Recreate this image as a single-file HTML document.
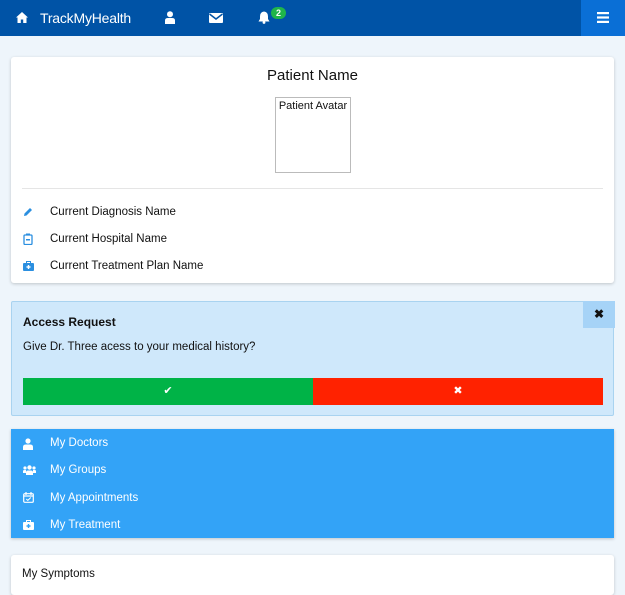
<!DOCTYPE html>
<html><head><meta charset="utf-8"><style>
*{box-sizing:border-box;margin:0;padding:0}
body{width:625px;height:573px;overflow:hidden;background:#eef5fb;font-family:"Liberation Sans",sans-serif;font-size:11.5px;color:#111;position:relative}
.nav{position:absolute;left:0;top:0;width:625px;height:36px;background:#0053a6;color:#fff}
.nav .t{position:absolute;left:40px;top:10px;font-size:14px;letter-spacing:-0.2px}
.burger{position:absolute;left:581px;top:0;width:44px;height:36px;background:#0a6fd6}
.card{position:absolute;left:11px;width:603px;background:#fff;border-radius:3px;box-shadow:0 1px 3px rgba(0,0,0,.2)}
.ab{position:absolute}
.item{position:absolute;left:39px}
.ic{position:absolute;left:12px}
</style></head><body>
<div class="nav">
 <svg class="ab" style="left:16px;top:12px" width="12" height="11" viewBox="0 0 12 11"><path d="M6 0L0 5.5h1.5V11h3.3V7.5h2.4V11h3.3V5.5H12z" fill="#fff"/></svg>
 <div class="t">TrackMyHealth</div>
 <svg class="ab" style="left:165px;top:11px" width="10" height="13" viewBox="0 0 10 13"><circle cx="5" cy="3.2" r="3" fill="#fff"/><path d="M0 13V9.5Q0 7 3 7h4q3 0 3 2.5V13z" fill="#fff"/></svg>
 <svg class="ab" style="left:209px;top:13px" width="14" height="10" viewBox="0 0 14 10"><rect width="14" height="10" rx="1" fill="#fff"/><path d="M0.5 1L7 6l6.5-5" stroke="#0053a6" stroke-width="1.5" fill="none"/></svg>
 <svg class="ab" style="left:258px;top:11px" width="12" height="13" viewBox="0 0 12 13"><path d="M6 0.5Q2 1 2 5.5V8L0.5 10.5h11L10 8V5.5Q10 1 6 0.5z" fill="#fff"/><circle cx="6" cy="11.5" r="1.4" fill="#fff"/></svg>
 <div class="ab" style="left:271px;top:7px;width:15px;height:12px;border-radius:6px;background:#1fb54a;font-size:9px;text-align:center;line-height:12px;font-weight:bold">2</div>
 <div class="burger"><svg class="ab" style="left:16px;top:12px" width="12" height="11" viewBox="0 0 12 11"><rect y="0" width="12" height="2.2" fill="#fff"/><rect y="4.4" width="12" height="2.2" fill="#fff"/><rect y="8.8" width="12" height="2.2" fill="#fff"/></svg></div>
</div>

<div class="card" style="top:57px;height:226px">
 <div class="ab" style="left:0;width:603px;top:10px;text-align:center;font-size:15px">Patient Name</div>
 <div class="ab" style="left:264px;top:40px;width:76px;height:76px;border:1px solid #bbb;font-size:11px;text-align:center;padding-top:2px">Patient Avatar</div>
 <div class="ab" style="left:11px;top:131px;width:581px;border-top:1px solid #e5e5e5"></div>
 <svg class="ic" style="top:150px" width="10" height="10" viewBox="0 0 10 10"><path d="M1 9l0.5-2.5L7 1l2 2-5.5 5.5z" fill="#2b8fe0"/></svg>
 <div class="item" style="top:149px">Current Diagnosis Name</div>
 <svg class="ic" style="top:176px" width="10" height="12" viewBox="0 0 10 12"><rect x="1" y="2" width="8" height="9.5" rx="1" fill="none" stroke="#2b8fe0" stroke-width="1.3"/><rect x="3" y="0.5" width="4" height="2" fill="#2b8fe0"/><rect x="3" y="6" width="4" height="1.5" fill="#2b8fe0"/></svg>
 <div class="item" style="top:176px">Current Hospital Name</div>
 <svg class="ic" style="top:204px" width="11" height="10" viewBox="0 0 11 10"><rect x="0" y="2" width="11" height="8" rx="1" fill="#2b8fe0"/><rect x="3.5" y="0.5" width="4" height="2" fill="none" stroke="#2b8fe0"/><path d="M5.5 4v4M3.5 6h4" stroke="#fff" stroke-width="1.4"/></svg>
 <div class="item" style="top:203px">Current Treatment Plan Name</div>
</div>

<div class="ab" style="left:11px;top:301px;width:603px;height:115px;background:#cfe8fb;border:1px solid #a9d3f0;border-radius:2px">
 <div class="ab" style="left:571px;top:-1px;width:32px;height:27px;background:#a6d3f7;text-align:center;line-height:27px;font-weight:bold;font-size:12px">✖</div>
 <div class="ab" style="left:11px;top:13px;font-weight:bold;font-size:12px">Access Request</div>
 <div class="ab" style="left:11px;top:39px">Give Dr. Three acess to your medical history?</div>
 <div class="ab" style="left:11px;top:76px;width:290px;height:27px;background:#00b347;color:#fff;text-align:center;line-height:27px;font-size:11px">✔</div>
 <div class="ab" style="left:301px;top:76px;width:290px;height:27px;background:#ff2200;color:#fff;text-align:center;line-height:27px;font-size:11px">✖</div>
</div>

<div class="ab" style="left:11px;top:429px;width:603px;height:109px;background:#33a3f7;color:#fff;box-shadow:0 1px 3px rgba(0,0,0,.2)">
 <svg class="ic" style="top:9px" width="10" height="12" viewBox="0 0 10 12"><circle cx="5" cy="3" r="2.6" fill="#fff"/><path d="M0 12V9q0-2.5 3-2.5h4q3 0 3 2.5v3z" fill="#fff"/></svg>
 <div class="item" style="top:8px">My Doctors</div>
 <svg class="ic" style="top:36px" width="13" height="10" viewBox="0 0 13 10"><circle cx="6.5" cy="2.5" r="2.2" fill="#fff"/><circle cx="2" cy="3" r="1.6" fill="#fff"/><circle cx="11" cy="3" r="1.6" fill="#fff"/><path d="M3 10V7.5q0-2 2-2h3q2 0 2 2V10zM0 8V6q0-1 1.5-1h1.5v3zM13 8V6q0-1-1.5-1H10v3z" fill="#fff"/></svg>
 <div class="item" style="top:35px">My Groups</div>
 <svg class="ic" style="top:63px" width="11" height="11" viewBox="0 0 11 11"><rect x="0.7" y="1.7" width="9.6" height="8.6" rx="1" fill="none" stroke="#fff" stroke-width="1.2"/><path d="M3 0v3M8 0v3M0.7 4h9.6" stroke="#fff" stroke-width="1.2"/><path d="M3.3 7l1.5 1.4L7.8 5.5" stroke="#fff" fill="none"/></svg>
 <div class="item" style="top:63px">My Appointments</div>
 <svg class="ic" style="top:91px" width="11" height="10" viewBox="0 0 11 10"><rect x="0" y="2" width="11" height="8" rx="1" fill="#fff"/><rect x="3.5" y="0.5" width="4" height="2" fill="none" stroke="#fff"/><path d="M5.5 4v4M3.5 6h4" stroke="#33a3f7" stroke-width="1.4"/></svg>
 <div class="item" style="top:90px">My Treatment</div>
</div>

<div class="card" style="top:555px;height:40px">
 <div class="ab" style="left:11px;top:13px">My Symptoms</div>
</div>
</body></html>
